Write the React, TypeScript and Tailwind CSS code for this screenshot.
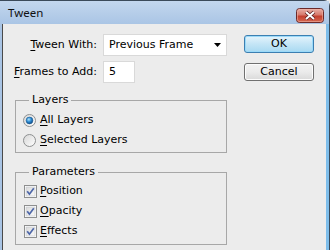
import { ReactNode } from "react";

function U({ children }: { children: ReactNode }) {
    return <span className="underline underline-offset-2">{children}</span>;
}

function Radio({ checked }: { checked?: boolean }) {
    return (
        <svg width="13" height="13" viewBox="0 0 13 13" className="shrink-0">
            <defs>
                <linearGradient id="rbg" x1="0" y1="0" x2="1" y2="1">
                    <stop offset="0" stopColor="#d6d6d6" />
                    <stop offset="1" stopColor="#ffffff" />
                </linearGradient>
                <radialGradient id="rdot" cx="0.4" cy="0.35" r="0.7">
                    <stop offset="0" stopColor="#aee3fb" />
                    <stop offset="0.5" stopColor="#2b8ad2" />
                    <stop offset="1" stopColor="#0b3f79" />
                </radialGradient>
            </defs>
            <circle cx="6.5" cy="6.5" r="6" fill="url(#rbg)" stroke="#8d8f90" />
            {checked && <circle cx="6.5" cy="6.5" r="3.4" fill="url(#rdot)" stroke="#1d5d94" strokeWidth="0.6" />}
        </svg>
    );
}

function Check() {
    return (
        <svg width="13" height="13" viewBox="0 0 13 13" className="shrink-0">
            <defs>
                <linearGradient id="cbg" x1="0" y1="0" x2="1" y2="1">
                    <stop offset="0" stopColor="#d9d9d9" />
                    <stop offset="1" stopColor="#fbfbfb" />
                </linearGradient>
            </defs>
            <rect x="0.5" y="0.5" width="12" height="12" fill="#fff" stroke="#8e8f8f" />
            <rect x="2" y="2" width="9" height="9" fill="url(#cbg)" stroke="#c4c7cc" strokeWidth="0.6" />
            <path d="M3.2 6.3 L5.4 9.2 L9.8 3.2" fill="none" stroke="#4d66a8" strokeWidth="1.7" />
        </svg>
    );
}

function CloseButton() {
    return (
        <svg width="28" height="15" viewBox="0 0 28 15" className="mt-[5px] shrink-0">
            <defs>
                <linearGradient id="cl" x1="0" y1="0" x2="0" y2="1">
                    <stop offset="0" stopColor="#e9b3aa" />
                    <stop offset="0.45" stopColor="#d77a6c" />
                    <stop offset="0.55" stopColor="#c4402f" />
                    <stop offset="1" stopColor="#d66a52" />
                </linearGradient>
            </defs>
            <rect x="0.5" y="0.5" width="27" height="14" rx="3" fill="url(#cl)" stroke="#6b2a2a" />
            <rect x="1.5" y="1.5" width="25" height="12" rx="2" fill="none" stroke="#f0b0a4" strokeOpacity="0.6" />
            <path d="M10 4 L18 11 M18 4 L10 11" stroke="#5a1f1f" strokeWidth="3.6" />
            <path d="M10 4 L18 11 M18 4 L10 11" stroke="#ffffff" strokeWidth="2" />
        </svg>
    );
}

function Group({ title, children }: { title: string; children: ReactNode }) {
    return (
        <fieldset className="ml-[12px] w-[212px] border border-[#a7a7a7] pb-[2px]">
            <legend className="ml-[13px] px-[3px] leading-[14px]">{title}</legend>
            {children}
        </fieldset>
    );
}

function Button({ children, primary }: { children: ReactNode; primary?: boolean }) {
    return (
        <div
            className={
                primary
                    ? "flex h-[18px] w-[70px] items-center justify-center rounded-[3px] border border-[#3c7fb1] bg-[linear-gradient(#e5f4fc,#c4e5f6_50%,#a8d9f2)] shadow-[inset_0_0_0_1px_#9bdaf9]"
                    : "flex h-[18px] w-[70px] items-center justify-center rounded-[3px] border border-[#707070] bg-[linear-gradient(#f2f2f2,#ebebeb_50%,#d9d9d9)] shadow-[inset_0_0_0_1px_#fcfcfc]"
            }
        >
            {children}
        </div>
    );
}

export default function App() {
    return (
        <div className="h-[250px] w-[330px] overflow-hidden bg-[#ececec] font-['DejaVu_Sans',sans-serif] text-[11px] text-black">
            <div className="flex h-full flex-col rounded-tr-[6px] border-r border-t border-[#3b4a5a] bg-[#a9c4e4]">
                {/* Title bar */}
                <div className="flex h-[23px] shrink-0 items-center justify-between bg-[linear-gradient(#c3d7ee,#aac5e5)] pl-[8px] pr-[5px]">
                    <span className="font-['Noto_Sans',sans-serif] text-[11.5px] text-[#111]">Tween</span>
                    <CloseButton />
                </div>

                {/* Body */}
                <div className="ml-[2px] flex flex-1 border-l border-r-[3px] border-l-[#4a4a4a] border-r-[#7dbdea] bg-[#ececec]">
                    <div className="w-[227px] pt-[10px]">
                        <div className="flex items-center">
                            <span className="w-[95px] pr-[1px] text-right">
                                <U>T</U>ween With:
                            </span>
                            <div className="ml-[5px] flex h-[22px] w-[124px] items-center justify-between border border-[#d9d9d9] bg-white pl-[5px] pr-[5px]">
                                <span>Previous Frame</span>
                                <svg width="7" height="4" viewBox="0 0 7 4">
                                    <path d="M0 0 H7 L3.5 4 Z" fill="#000" />
                                </svg>
                            </div>
                        </div>
                        <div className="mt-[5px] flex items-center">
                            <span className="w-[95px] pr-[1px] text-right">
                                <U>F</U>rames to Add:
                            </span>
                            <div className="ml-[5px] flex h-[22px] w-[32px] items-center border border-[#d9d9d9] bg-white pl-[5px]">
                                5
                            </div>
                        </div>

                        <div className="mt-[10px]">
                            <Group title="Layers">
                                <div className="pt-[3px]">
                                    <div className="flex h-[20px] items-center gap-[4px] pl-[7px]">
                                        <Radio checked />
                                        <span>
                                            <U>A</U>ll Layers
                                        </span>
                                    </div>
                                    <div className="flex h-[20px] items-center gap-[4px] pl-[7px]">
                                        <Radio />
                                        <span>
                                            <U>S</U>elected Layers
                                        </span>
                                    </div>
                                </div>
                            </Group>
                        </div>

                        <div className="mt-[12px]">
                            <Group title="Parameters">
                                <div className="pb-[1px] pt-[2px]">
                                    {[
                                        ["P", "osition"],
                                        ["O", "pacity"],
                                        ["E", "ffects"],
                                    ].map(([k, rest]) => (
                                        <div key={k} className="flex h-[20px] items-center gap-[3px] pl-[8px]">
                                            <Check />
                                            <span>
                                                <U>{k}</U>
                                                {rest}
                                            </span>
                                        </div>
                                    ))}
                                </div>
                            </Group>
                        </div>
                    </div>

                    <div className="flex flex-col gap-[10px] pl-[14px] pt-[11px]">
                        <Button primary>OK</Button>
                        <Button>Cancel</Button>
                    </div>
                </div>
            </div>
        </div>
    );
}
